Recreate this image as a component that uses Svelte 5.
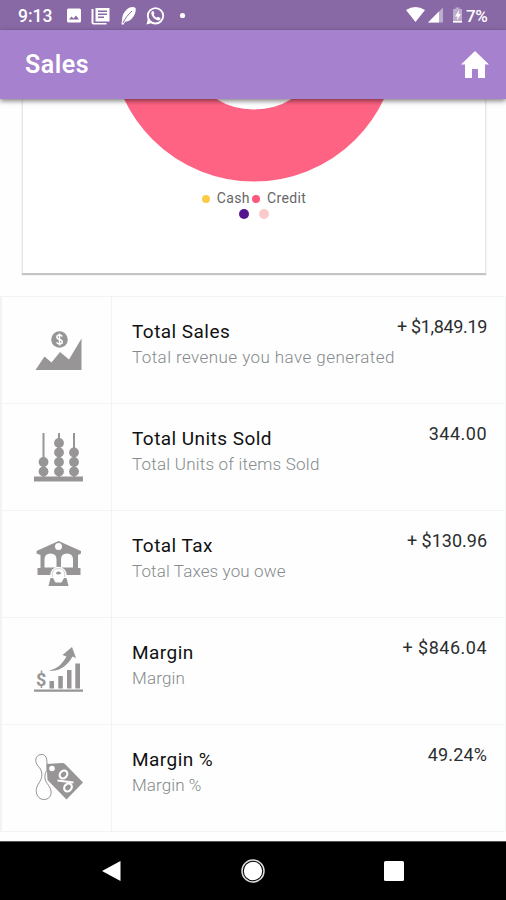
<script lang="ts">
  const legend = [
    { label: 'Cash', color: '#fccb48' },
    { label: 'Credit', color: '#fb587d' }
  ];

  // tracking: letter spacing of the note and of the value, in px
  const rows = [
    { icon: 'sales', title: 'Total Sales', note: 'Total revenue you have generated', value: '+ $1,849.19', tracking: [0.43, -0.35] },
    { icon: 'units', title: 'Total Units Sold', note: 'Total Units of items Sold', value: '344.00', tracking: [0.22, 0.5] },
    { icon: 'tax', title: 'Total Tax', note: 'Total Taxes you owe', value: '+ $130.96', tracking: [0.13, 0] },
    { icon: 'margin', title: 'Margin', note: 'Margin', value: '+ $846.04', tracking: [0.17, 0.5] },
    { icon: 'percent', title: 'Margin %', note: 'Margin %', value: '49.24%', tracking: [0.1, 0.15] }
  ];
</script>

<div class="screen">
  <div class="status">
    <span class="time">9:13</span>
    <svg class="notifications" width="124" height="20" viewBox="0 0 124 20" fill="#fff">
      <path fill-rule="evenodd" d="M3.500 2.500h11q1.500 0 1.500 1.500v11q0 1.500-1.500 1.500h-11q-1.500 0-1.500-1.500v-11q0-1.500 1.500-1.500zM4 13.500h10l-3-4-2.500 3-2-2z" />
      <path d="M28.500 3v14h13v1.500h-13q-2 0-2-2v-13.500z" />
      <path fill-rule="evenodd" d="M30.500 2h14v13.500h-14zM33 4.500v1.500h9v-1.500zM33 7.500v1.500h9v-1.500zM33 10.500v1.500h6v-1.500z" />
      <path d="M56.500 18c1-5 0-9 4-13 2.500-4 8-5 10-3 1 3-1 8-4 11-2 2-4 2.500-6 2.500l-2.500 3.500z" />
      <path d="M58 17c2-5 5-8 9-12" fill="none" stroke="#8869a5" stroke-width="1" />
      <g transform="translate(1 0)">
        <circle cx="89.500" cy="9.800" r="7.700" fill="none" stroke="#fff" stroke-width="1.800" />
        <path d="M82 12.500l-1.500 6 5.500-1.500z" />
        <path d="M86 5.300l1.300-.3 1.200 2.700-.9 1.100q1 2 3 3l1.200-1.100 2.700 1.200q.2 2-1.900 2.500c-3 0-7.200-4-7.300-7 0-1 .3-1.600.7-2.100z" />
      </g>
      <circle cx="117.500" cy="9.500" r="2.600" />
    </svg>
    <svg class="signals" width="60" height="20" viewBox="0 0 60 20" fill="#fff">
      <path d="M0 4q9.500-6 19 0l-9.500 12z" />
      <path d="M37 1.500v15h-15z" opacity=".45" />
      <path d="M33 5.500v11h-11z" />
      <path d="M47 3h2.500v-1.500h4v1.500h2.500v13.500h-9z" opacity=".45" />
      <path d="M53 4l-4 6.500h2.500l-.5 4 4-6.500h-2.500zM47 15h9v1.500h-9z" />
    </svg>
    <span class="battery">7%</span>
  </div>

  <header>
    <h1>Sales</h1>
    <svg width="28" height="27" viewBox="0 0 28 27" fill="#fff">
      <path d="M14 0l14 13.500h-4v13.500h-7v-9h-6v9h-7v-13.500h-4z" />
    </svg>
  </header>

  <section class="chart">
    <svg class="donut" width="290" height="83" viewBox="0 61 290 83">
      <circle cx="145" cy="0" r="107.500" fill="none" stroke="#ff6384" stroke-width="72" />
    </svg>
    <div class="legend">
      {#each legend as item}
        <span class="dot" style="background: {item.color}"></span>
        <span class="label">{item.label}</span>
      {/each}
    </div>
    <div class="pager">
      <span class="current"></span>
      <span></span>
    </div>
  </section>

  <main>
    {#each rows as row}
      <div class="row">
        <div class="icon">
          <svg width="50" height="52" viewBox="0 0 50 52" fill="#979595">
            {#if row.icon === 'sales'}
              <circle cx="25.500" cy="16.500" r="8.300" />
              <path d="M1.500 47L10.500 33.500l7 6 8.500-10.500 9 7.500L47.500 15.500v31.500z" />
              <path d="M28.300 13.500q-1-1.500-2.800-1.500-2.600 0-2.600 2t2.700 2.500q2.700.6 2.700 2.500t-2.700 1.900q-2 0-3-1.600M25.500 10.500v12" fill="none" stroke="#fff" stroke-width="1.500" />
            {:else if row.icon === 'units'}
              <path d="M8.500 3h2v40h-2zM24 3h2v40h-2zM39 3h2v40h-2zM0 46.500h49v5h-49z" />
              {#each [[9.5, 32], [9.5, 41.5], [25, 13], [25, 22.5], [25, 32], [25, 41.5], [40, 22.5], [40, 32], [40, 41.5]] as [cx, cy]}
                <circle {cx} {cy} r="4.900" />
              {/each}
              <path d="M8.500 43h2v4h-2zM24 43h2v4h-2zM39 43h2v4h-2z" />
            {:else if row.icon === 'tax'}
              <path fill-rule="evenodd" d="M24.500 4L47 14v2.500l-3 1.500v13h2.500v7h-43v-7h3v-13l-4-1.500v-2.500zM10.500 30.500h12v-8q0-6-6-6t-6 6zM27 30.500h12v-8q0-6-6-6t-6 6z" />
              <circle cx="24.500" cy="9.500" r="3.500" fill="#fff" />
              <circle cx="24.500" cy="38" r="8.200" fill="#fff" />
              <path d="M18.500 40q-1.500-8.500 6-8.500t6 8.500" fill="none" stroke="#c9c8c8" stroke-width=".8" />
              <ellipse cx="24.500" cy="36" rx="2.500" ry="1.500" />
              <path d="M16.500 41h2.500l2.500 4.500h6l2.500-4.500h2.500l2 8h-20z" />
            {:else if row.icon === 'margin'}
              <path d="M0 45.500h49v2.200h-49zM15.500 37h4.500v7.500h-4.500zM24.300 32h4.500v12.500h-4.500zM33 26h4.500v18.500h-4.500zM41.300 19.500h4.700v25h-4.700z" />
              <path d="M15 26.500c8-1.500 13-6 17.500-14l-4-1.500L38 3l4 11-3.500-1.500c-5 9-13 15.500-23.500 14z" />
              <text x="2" y="42" font-size="18" font-weight="700">$</text>
            {:else}
              <path d="M13 19C13 11 14 3 7 3.500 1 4 .5 11 4 15c5 5 5 11 1 17-4 5-4 13 2 16 6 2 11-2 10-8-1-6-7-9-6-15 0-3 1-5 3-7" fill="none" stroke="#979595" stroke-width="1" />
              <path d="M12.500 13l15.500-1q2 0 3 1l18 18.500-16.500 17L13.500 29z" />
              <circle cx="18" cy="17.500" r="2.800" fill="#fff" />
              <g fill="none" stroke="#fff" stroke-width="2.200">
                <ellipse cx="29.500" cy="23.500" rx="4.200" ry="3.400" transform="rotate(-45 29.500 23.500)" />
                <ellipse cx="34" cy="36.500" rx="4.200" ry="3.400" transform="rotate(-45 34 36.500)" />
                <path d="M23.500 29.500L39.500 31.500" />
              </g>
            {/if}
          </svg>
        </div>
        <div class="text">
          <div class="title">{row.title}</div>
          <div class="note" style="letter-spacing: {row.tracking[0]}px">{row.note}</div>
        </div>
        <div class="value" style="letter-spacing: {row.tracking[1]}px">{row.value}</div>
      </div>
    {/each}
  </main>

  <nav>
    <svg width="20" height="22" viewBox="0 0 20 22"><path d="M0 11L18.500 1v20z" fill="#fff" /></svg>
    <svg width="24" height="24" viewBox="0 0 24 24">
      <circle cx="12" cy="12" r="11" fill="none" stroke="#ddd" stroke-width="1.500" />
      <circle cx="12" cy="12" r="9.200" fill="#fff" />
    </svg>
    <svg width="20" height="20" viewBox="0 0 20 20"><rect width="20" height="20" rx="1.500" fill="#fff" /></svg>
  </nav>
</div>

<style>
  :global(body) {
    background: #fefefe;
  }

  .screen {
    width: 506px;
    height: 900px;
    display: flex;
    flex-direction: column;
    overflow: hidden;
    font-family: Roboto, 'Noto Sans', sans-serif;
  }

  .screen svg {
    display: block;
    flex: none;
  }

  .status {
    box-sizing: border-box;
    height: 30px;
    flex: none;
    display: flex;
    align-items: center;
    padding: 2px 16px 0 18px;
    background: #8869a5;
    color: #fff;
    font-size: 17.5px;
    font-weight: 500;
  }

  .time {
    width: 47px;
  }

  .signals {
    margin-left: auto;
  }

  .battery {
    width: 24px;
    font-size: 17px;
    letter-spacing: -0.3px;
  }

  header {
    box-sizing: border-box;
    height: 69px;
    flex: none;
    display: flex;
    align-items: center;
    justify-content: space-between;
    padding: 0 17px 0 25px;
    background: #a681cd;
    box-shadow: 0 2px 5px rgba(0, 0, 0, 0.5);
    position: relative;
    z-index: 1;
  }

  h1 {
    margin: 0;
    color: #fff;
    font-size: 25px;
    font-weight: 600;
    letter-spacing: 0.5px;
  }

  .chart {
    box-sizing: border-box;
    height: 174px;
    flex: none;
    margin: 0 20px 23px 22px;
    border: solid #e6e6e6;
    border-width: 0 1px;
    box-shadow: 0 2px 1px #c4c4c4;
    background: #fff;
    display: flex;
    flex-direction: column;
    align-items: center;
  }

  .legend {
    display: flex;
    align-items: center;
    height: 17px;
    margin: 7px 2px 0 0;
    color: #666;
    font-size: 14px;
    letter-spacing: 0.4px;
  }

  .dot {
    width: 8px;
    height: 8px;
    border-radius: 50%;
    margin: 2px 7px 0 2px;
  }

  .pager {
    display: flex;
    gap: 10px;
    margin-top: 3px;
  }

  .pager span {
    width: 10px;
    height: 10px;
    border-radius: 50%;
    background: #fccaca;
  }

  .pager .current {
    background: #53158f;
  }

  main {
    flex: none;
    height: 536px;
    box-sizing: border-box;
    display: flex;
    flex-direction: column;
    border: 1px solid #f1f3f4;
    border-left-width: 2px;
    border-bottom: 0;
  }

  .row {
    flex: 1;
    box-sizing: border-box;
    display: flex;
    border-bottom: 1px solid #f1f3f4;
  }

  .icon {
    flex: none;
    box-sizing: border-box;
    width: 110px;
    padding: 26px 0 0 32px;
    border-right: 1px solid #f1f3f4;
  }

  .text {
    flex: 1;
    width: 0;
    padding: 22px 0 0 20px;
    white-space: nowrap;
  }

  .title {
    color: #111;
    font-size: 19px;
    line-height: 26px;
    letter-spacing: 0.45px;
  }

  .note {
    color: #858b8c;
    font-size: 17px;
    font-weight: 300;
    line-height: 24px;
  }

  .value {
    flex: none;
    padding: 17px 18px 0 0;
    color: #2b2e2f;
    font-size: 18px;
    line-height: 26px;
    white-space: nowrap;
  }

  nav {
    flex: none;
    box-sizing: border-box;
    height: 59px;
    margin-top: auto;
    border-top: 1px solid #555;
    background: #000;
    display: flex;
    align-items: center;
    justify-content: space-between;
    padding: 0 102px;
  }
</style>
